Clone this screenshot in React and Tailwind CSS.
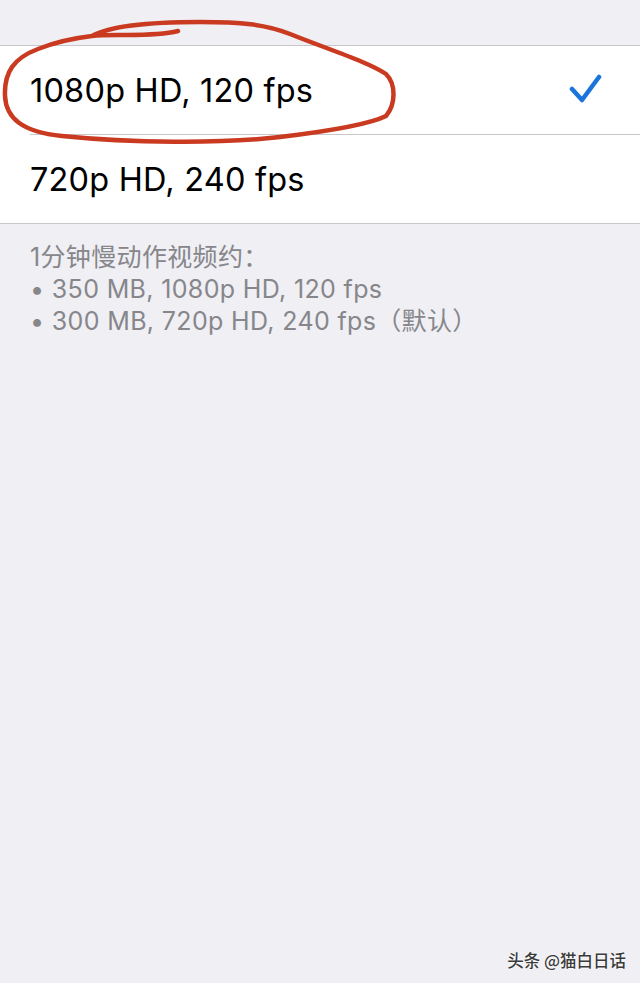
import React from "react";

export default function App() {
  const font = { fontFamily: 'Inter, "Noto Sans CJK SC", sans-serif' };
  return (
    <div className="relative w-[640px] h-[983px] bg-[#efeff4] overflow-hidden" style={font}>
      <div className="h-[45px]" />
      <div className="bg-white border-t border-b border-[#c8c7cc]">
        <div className="h-[88px] flex items-center justify-between pl-[30px] pr-[37px]">
          <span className="pt-[2px] text-[32.5px] text-black tracking-[0.2px]">1080p HD, 120 fps</span>
          <svg width="34" height="32" viewBox="0 0 34 32" className="block">
            <path d="M3 15 L13 26 L30 3" fill="none" stroke="#1a74dc" strokeWidth="4.5" strokeLinecap="round" strokeLinejoin="round" />
          </svg>
        </div>
        <div className="ml-[30px] h-px bg-[#c8c7cc]" />
        <div className="h-[88px] flex items-center pl-[30px]">
          <span className="pt-[3px] text-[32.5px] text-black tracking-[0.2px]">720p HD, 240 fps</span>
        </div>
      </div>
      <div className="pl-[30px] pt-[17px] text-[25px] leading-[32px] text-[#86868b] tracking-[0.35px]">
        <div>1分钟慢动作视频约：</div>
        <div>• 350 MB, 1080p HD, 120 fps</div>
        <div>• 300 MB, 720p HD, 240 fps（默认）</div>
      </div>

      <svg className="absolute left-0 top-0 pointer-events-none" width="640" height="160" viewBox="0 0 640 160">
        <path
          d="M178 31 C150 38 112 33 92 36 C110 26 150 22 200 22 C240 22 265 24 290 34 C330 50 368 62 386 74 C396 84 396 104 386 116 C370 124 330 131 280 137 C220 144 130 143 62 136 C22 132 6 118 5 96 C4 72 14 58 38 49 C58 41 75 38 92 36"
          fill="none"
          stroke="#c93a21"
          strokeWidth="4.5"
          strokeLinecap="round"
          strokeLinejoin="round"
        />
      </svg>

      <div
        className="absolute right-[14px] top-[948px] text-[16.5px] font-medium text-[#3a3a3a] [text-shadow:0_0_2px_#fff,0_0_2px_#fff]"
        style={{ fontFamily: '"Noto Sans CJK SC", sans-serif' }}
      >
        头条 @猫白日话
      </div>
    </div>
  );
}
